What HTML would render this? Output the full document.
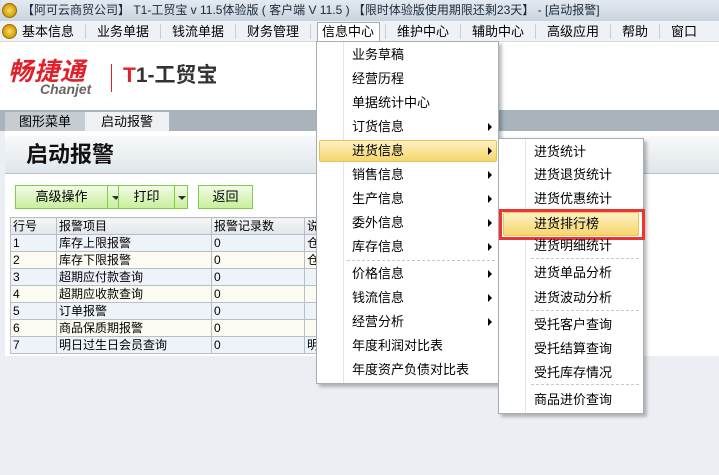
<!DOCTYPE html>
<html><head><meta charset="utf-8"><style>
*{margin:0;padding:0;box-sizing:border-box}
body{width:719px;height:475px;overflow:hidden;position:relative;background:#ebeff3;font-family:"Liberation Sans","Noto Sans CJK SC","WenQuanYi Zen Hei",sans-serif;font-size:12px;color:#000}
.a{position:absolute}
.title{left:0;top:0;width:719px;height:21px;background:linear-gradient(#e4eaf1,#c9d3dd);font-size:12px;line-height:21px;padding-left:22px;color:#1a2a3a}
.coin{width:15px;height:15px;border-radius:50%;background:radial-gradient(#f8dd6a,#d9a512 60%,#a97a08);border:1px solid #9a6b00}
.menu{left:0;top:21px;width:719px;height:21px;background:#eef1f5;border-bottom:1px solid #d8dde3}
.mi{position:absolute;top:0;height:21px;line-height:21px;font-size:13px}
.sep{position:absolute;top:3px;width:1px;height:15px;background:#c8ced6}
.logo{left:0;top:42px;width:719px;height:68px;background:#fff}
.tabs{left:0;top:110px;width:719px;height:21px;background:#a8b3bb}
.tab{position:absolute;top:2px;height:19px;line-height:19px;font-size:13px;text-align:center}
.panel{left:5px;top:131px;width:714px;height:225px;background:#fff}
.hdr{left:5px;top:136px;width:714px;height:38px;background:linear-gradient(#f7f9fa,#dfe6ea);border-bottom:1px solid #b7c0c7;font-size:22px;line-height:38px;padding-left:21px;font-weight:bold;color:#111}
.btn{position:absolute;top:185px;height:24px;border:1px solid #7fcc4a;background:linear-gradient(#f1fbe6,#c9ef9c);text-align:center;line-height:22px;font-size:13px}
.tri{width:0;height:0;border-left:4px solid transparent;border-right:4px solid transparent;border-top:4px solid #333;position:absolute;left:4px;top:10px}
table{position:absolute;left:10px;top:217px;border-collapse:collapse;font-size:12px}
td{border:1px solid #b8bec6;height:17px;line-height:15px;padding:0 2px;white-space:nowrap;overflow:hidden}
tr.h td{background:linear-gradient(#f5f6f7,#e1e5e9);height:17px}
tr.o td{background:#eef3fa}
tr.e td{background:#fcfbf1}
.dd{background:#fff;border:1px solid #a7adb4;box-shadow:3px 3px 3px rgba(0,0,0,.25)}
.it{position:absolute;left:35px;font-size:13px;line-height:16px}
.ar{position:absolute;width:0;height:0;border-top:4px solid transparent;border-bottom:4px solid transparent;border-left:4px solid #000}
.hl{position:absolute;background:linear-gradient(#fdf1c4,#f6d66c);border:1px solid #e8c45a;border-radius:2px}
.ds{position:absolute;height:0;border-top:1px dashed #c5c9cd}
</style></head><body>
<div class="a title">【阿可云商贸公司】 T1-工贸宝 v 11.5体验版 ( 客户端 V 11.5 ) 【限时体验版使用期限还剩23天】 - [启动报警]</div>
<div class="a coin" style="left:2px;top:3px"></div>
<div class="a menu">
<div class="coin" style="position:absolute;left:2px;top:3px"></div>
<div class="mi" style="left:22px">基本信息</div><div class="sep" style="left:85px"></div>
<div class="mi" style="left:97px">业务单据</div><div class="sep" style="left:160px"></div>
<div class="mi" style="left:172px">钱流单据</div><div class="sep" style="left:235px"></div>
<div class="mi" style="left:247px">财务管理</div><div class="sep" style="left:310px"></div>
<div style="position:absolute;left:317px;top:1px;width:63px;height:21px;border:1px solid #a7adb4;border-bottom:none;background:#fff"></div>
<div class="mi" style="left:322px">信息中心</div><div class="sep" style="left:385px"></div>
<div class="mi" style="left:397px">维护中心</div><div class="sep" style="left:460px"></div>
<div class="mi" style="left:472px">辅助中心</div><div class="sep" style="left:535px"></div>
<div class="mi" style="left:547px">高级应用</div><div class="sep" style="left:610px"></div>
<div class="mi" style="left:622px">帮助</div><div class="sep" style="left:659px"></div>
<div class="mi" style="left:671px">窗口</div>
</div>
<div class="a logo">
<div class="a" style="left:8px;top:16px;font-size:25px;line-height:28px;font-weight:bold;font-style:italic;color:#e0202a;letter-spacing:1px">畅捷通</div>
<div class="a" style="left:40px;top:39px;font-size:14px;font-style:italic;font-weight:bold;color:#666">Chanjet</div>
<div class="a" style="left:111px;top:22px;width:1px;height:28px;background:#e0202a"></div>
<div class="a" style="left:123px;top:21px;font-size:21px;line-height:26px;font-weight:bold;color:#333"><span style="color:#e0202a">T</span>1-工贸宝</div>
</div>
<div class="a tabs">
<div class="tab" style="left:5px;width:80px;background:#c5cdd3">图形菜单</div>
<div class="tab" style="left:85px;width:84px;background:#eef1f4">启动报警</div>
</div>
<div class="a panel"></div>
<div class="a hdr">启动报警</div>
<div class="btn" style="left:15px;width:93px">高级操作</div>
<div class="btn" style="left:107px;width:16px"><div class="tri"></div></div>
<div class="btn" style="left:118px;width:57px">打印</div>
<div class="btn" style="left:174px;width:14px"><div class="tri" style="left:3px"></div></div>
<div class="btn" style="left:198px;width:55px">返回</div>
<table>
<tr class="h"><td style="width:46px">行号</td><td style="width:155px">报警项目</td><td style="width:93px">报警记录数</td><td style="width:20px">说</td></tr>
<tr class="o"><td>1</td><td>库存上限报警</td><td>0</td><td>仓</td></tr>
<tr class="e"><td>2</td><td>库存下限报警</td><td>0</td><td>仓</td></tr>
<tr class="o"><td>3</td><td>超期应付款查询</td><td>0</td><td></td></tr>
<tr class="e"><td>4</td><td>超期应收款查询</td><td>0</td><td></td></tr>
<tr class="o"><td>5</td><td>订单报警</td><td>0</td><td></td></tr>
<tr class="e"><td>6</td><td>商品保质期报警</td><td>0</td><td></td></tr>
<tr class="o"><td>7</td><td>明日过生日会员查询</td><td>0</td><td>明</td></tr>
</table>

<div class="a dd" style="left:316px;top:41px;width:183px;height:343px">
<div class="a" style="left:26px;top:0;width:1px;height:341px;background:#e3e6e9"></div>
<div class="hl" style="left:2px;top:98px;width:178px;height:22px"></div>
<div class="it" style="top:5px">业务草稿</div>
<div class="it" style="top:29px">经营历程</div>
<div class="it" style="top:53px">单据统计中心</div>
<div class="it" style="top:77px">订货信息</div><div class="ar" style="left:171px;top:81px"></div>
<div class="it" style="top:101px">进货信息</div><div class="ar" style="left:171px;top:105px"></div>
<div class="it" style="top:125px">销售信息</div><div class="ar" style="left:171px;top:129px"></div>
<div class="it" style="top:149px">生产信息</div><div class="ar" style="left:171px;top:153px"></div>
<div class="it" style="top:173px">委外信息</div><div class="ar" style="left:171px;top:177px"></div>
<div class="it" style="top:197px">库存信息</div><div class="ar" style="left:171px;top:201px"></div>
<div class="ds" style="left:30px;top:218px;width:148px"></div>
<div class="it" style="top:224px">价格信息</div><div class="ar" style="left:171px;top:228px"></div>
<div class="it" style="top:248px">钱流信息</div><div class="ar" style="left:171px;top:252px"></div>
<div class="it" style="top:272px">经营分析</div><div class="ar" style="left:171px;top:276px"></div>
<div class="it" style="top:296px">年度利润对比表</div>
<div class="it" style="top:320px">年度资产负债对比表</div>
</div>

<div class="a dd" style="left:498px;top:138px;width:146px;height:276px">
<div class="a" style="left:26px;top:0;width:1px;height:274px;background:#e3e6e9"></div>
<div class="it" style="top:5px">进货统计</div>
<div class="it" style="top:28px">进货退货统计</div>
<div class="it" style="top:52px">进货优惠统计</div>
<div class="hl" style="left:4px;top:73px;width:136px;height:24px"></div>
<div class="a" style="left:0;top:70px;width:146px;height:31px;border:3px solid #ee3333"></div>
<div class="it" style="top:77px">进货排行榜</div>
<div class="it" style="top:99px">进货明细统计</div>
<div class="ds" style="left:32px;top:119px;width:108px"></div>
<div class="it" style="top:126px">进货单品分析</div>
<div class="it" style="top:151px">进货波动分析</div>
<div class="ds" style="left:32px;top:171px;width:108px"></div>
<div class="it" style="top:178px">受托客户查询</div>
<div class="it" style="top:202px">受托结算查询</div>
<div class="it" style="top:226px">受托库存情况</div>
<div class="ds" style="left:32px;top:245px;width:108px"></div>
<div class="it" style="top:253px">商品进价查询</div>
</div>
</body></html>
